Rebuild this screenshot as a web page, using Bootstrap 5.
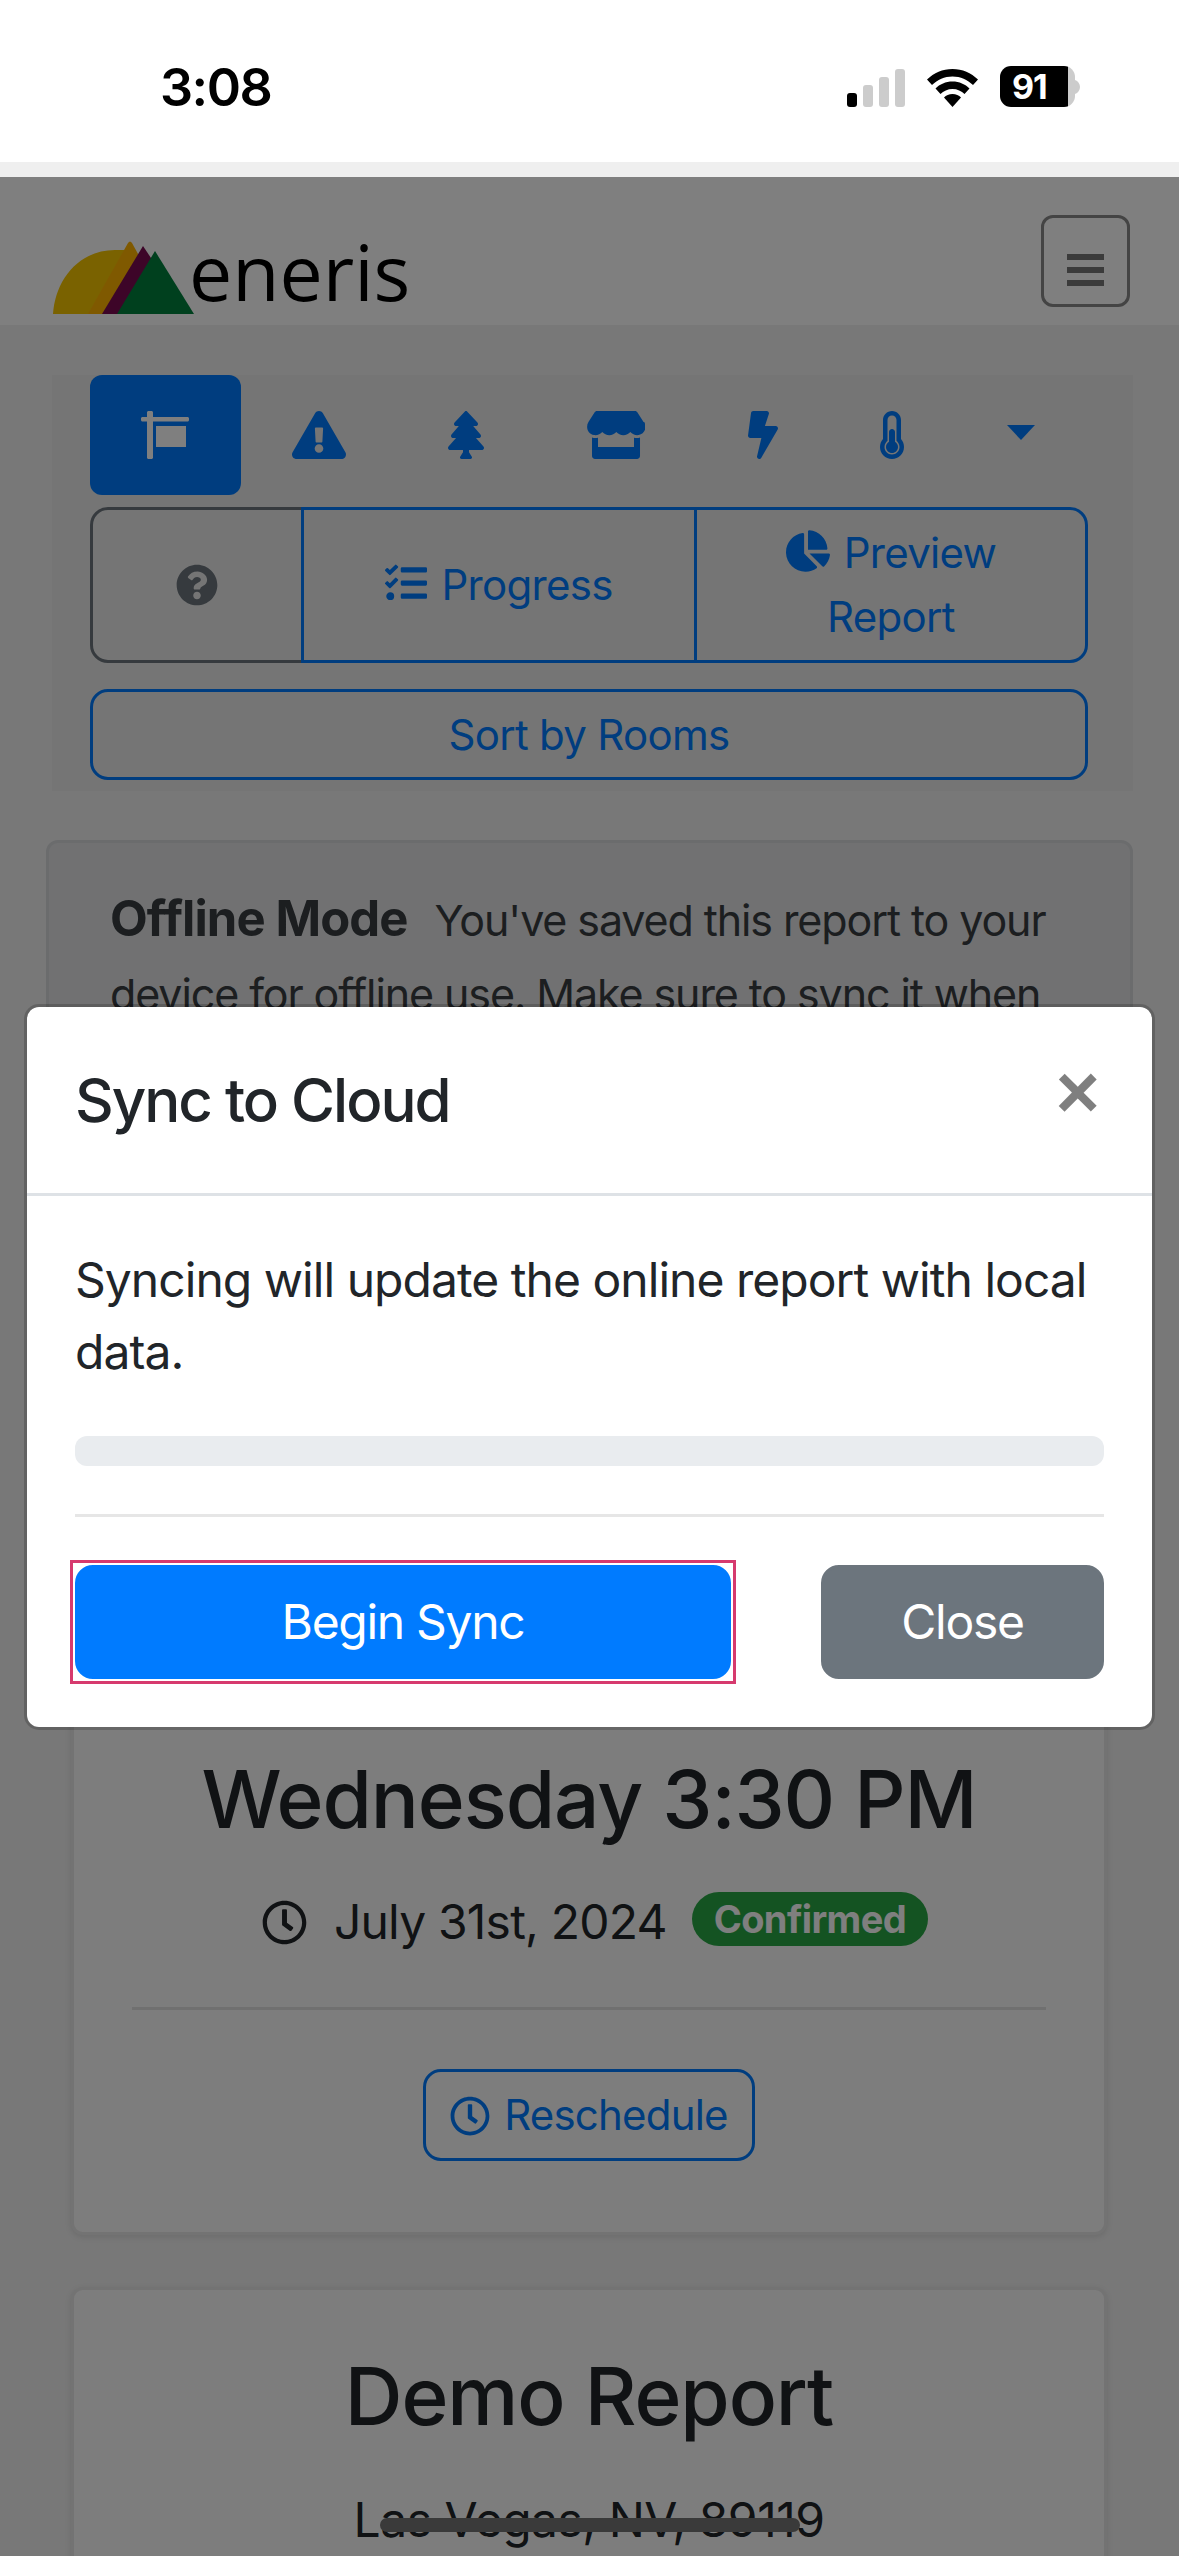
<!DOCTYPE html>
<html lang="en">
<head>
    <meta charset="UTF-8">
    <meta name="viewport" content="width=device-width, initial-scale=1.0">
    <title>Sync to Cloud</title>
    <link href="https://cdn.jsdelivr.net/npm/bootstrap@5.3.3/dist/css/bootstrap.min.css" rel="stylesheet">
    <script defer src="https://cdn.jsdelivr.net/npm/bootstrap@5.3.3/dist/js/bootstrap.bundle.min.js"></script>
    <style>
        /* page was shot at 3x, so 1rem = 48px here */
        html { font-size: 48px; }
        :root {
            --bs-border-width: 3px;
            --bs-border-radius: 12px;
            --bs-body-font-family: Inter, "Liberation Sans", sans-serif;
            --bs-body-color: #212529;
        }
        body {
            width: 1179px;
            height: 2556px;
            overflow: hidden;
            position: relative;
            background: #fff;
            letter-spacing: -.96px;
        }
        svg { display: block; fill: currentColor; }

        /* phone status bar */
        .status-bar { height: 162px; padding: 67px 99px 0 160px; background: #fff; color: #000; }
        .status-time { font-size: 52px; font-weight: 600; line-height: 42px; letter-spacing: -1.5px; }
        .status-icons { column-gap: 22px; margin-top: -1px; }
        .status-icons > svg { margin-top: 3px; }
        .batt-box { width: 75px; height: 41px; border-radius: 11px; font-size: 34px; font-weight: 700; line-height: 41px; padding-left: 12px; color: #fff; letter-spacing: -1px; background: linear-gradient(90deg, #000 68px, #ccc 68px); }
        .browser-strip { height: 15px; background: #efefef; }

        /* everything under the backdrop */
        .web-view { position: relative; height: 2379px; overflow: hidden; background: #f0f0f0; }
        .top-bar { height: 148px; padding: 38px 49px 0 53px; background: #fff; }
        .brand-name { font-family: "Open Sans", sans-serif; font-size: 77px; line-height: 76px; color: #000; margin: 0 0 4px -5px; letter-spacing: 0; }
        .brand-wrap { margin-top: 19px; }
        .menu-btn { width: 89px; height: 92px; padding: 25px 23px 0; border: 3px solid #888; border-radius: 12px; background: transparent; }
        .menu-btn span { display: block; height: 6px; margin-bottom: 7px; background: #777; }

        .tool-box { margin: 50px 46px 0 52px; padding: 0 45px 11px 38px; background: #eaeaea; }
        .tool-tabs .nav-link { height: 120px; padding: 36px 51.3px; color: #007bff; border-radius: 12px; }
        .tool-tabs .nav-link.active { background: #007bff; color: #fff; }
        .tool-tabs .tool-caret { padding-top: 50px; }
        .tool-caret i { display: block; width: 0; height: 0; border: 14px solid transparent; border-top: 15px solid currentColor; border-bottom: 0; }
        .btn-outline-primary { --bs-btn-color: #007bff; --bs-btn-border-color: #007bff; }
        .btn-outline-secondary { --bs-btn-color: #6c757d; --bs-btn-border-color: #6c757d; }
        .tool-btn { font-size: 42px; line-height: 64px; padding: 10.5px 36px; letter-spacing: -.7px; }
        .tool-group { height: 156px; margin-top: 12px; }
        .tool-group .help-btn { flex: 0 0 214px; }
        .tool-group .prog-btn { flex: 0 0 396px; }
        .tool-group .prev-btn { flex: 0 0 394px; }
        .btn-ico { display: inline-block; vertical-align: -4px; margin-right: 14px; }
        .sort-btn { margin-top: 26px; width: 100%; }

        .offline-note { margin: 49px 46px 0; padding: 39px 61px; background: #e2e3e5; border-color: #d6d8db; color: #383d41; border-radius: 12px; height: 700px; font-size: 43px; line-height: 74px; letter-spacing: -1.1px; }
        .offline-note b { margin-right: 16px; font-size: 49px; letter-spacing: -.9px; }

        .info-card { margin: 0 72px 52px 71px; border-radius: 12px; border-color: rgba(0,0,0,.08); background: #fbfbfb; box-shadow: 0 2px 6px rgba(0,0,0,.1); text-align: center; }
        .card-big { font-size: 80px; line-height: 96px; margin: 0; color: #212529; font-weight: 500; letter-spacing: -1.1px; }
        .when-card { margin-top: 156px; padding: 52px 58px 71px; }
        .when-row { margin-top: 48px; height: 54px; padding-left: 12px; font-size: 48px; line-height: 54px; letter-spacing: -.8px; }
        .when-clock { margin-right: 27px; }
        .ok-badge { --bs-badge-font-size: 38px; --bs-badge-font-weight: 700; --bs-badge-padding-x: 22px; --bs-badge-padding-y: 0; line-height: 54px; height: 54px; background: #28a745; border-radius: 27px; margin-left: 25px; margin-top: -6px; letter-spacing: -.6px; }
        .when-line { margin: 58px 0 59px; opacity: 1; border-color: rgba(0,0,0,.1); }
        .resched-btn { font-size: 42px; line-height: 64px; padding: 11px 24px; letter-spacing: -.8px; }
        .resched-btn svg { display: inline-block; vertical-align: -6px; margin-right: 14px; }
        .site-card { padding: 58px 58px 0; height: 400px; }
        .site-addr { margin-top: 40px; font-size: 48px; line-height: 72px; letter-spacing: -.5px; }

        /* modal sits inside the web view, not the whole shot */
        .modal-backdrop.sync-shade { position: absolute; width: 100%; height: 100%; }
        .modal.sync-modal { position: absolute; display: block; overflow: hidden; }
        .sync-modal .modal-content { --bs-modal-border-radius: 15px; --bs-modal-inner-border-radius: 12px; --bs-modal-border-width: 3px; }
        .sync-modal .modal-dialog { margin: 24px; max-width: none; min-height: calc(100% - 48px); }
        .sync-modal .modal-title { font-size: 60px; line-height: 90px; font-weight: 500; letter-spacing: -2px; }
        .sync-modal .modal-header { padding: 48px; border-bottom: 3px solid #dee2e6; }
        .sync-modal .modal-body { padding: 48px; font-size: 48px; }
        .close-x { border: 0; padding: 0; background: none; color: rgba(0,0,0,.5); font-family: "Liberation Sans", sans-serif; font-size: 76px; font-weight: 700; line-height: 72px; margin: -16px 4px 0 auto; }
        .sync-bar { height: 30px; --bs-progress-bg: #e9ecef; --bs-progress-border-radius: 12px; }
        .sync-line { margin: 48px 0; opacity: 1; border-color: #e6e6e6; }
        .sync-actions { --bs-gutter-x: 90px; }
        .sync-actions .btn { letter-spacing: -1.3px; }
        .btn-primary { --bs-btn-bg: #007bff; --bs-btn-border-color: #007bff; }
        .btn-secondary { --bs-btn-bg: #6c757d; --bs-btn-border-color: #6c757d; }
        .begin-frame { outline: 3px solid #d63a6e; outline-offset: 2px; }

        .home-bar { position: absolute; left: 380px; top: 2518px; width: 420px; height: 14px; border-radius: 7px; background: #3a3a3a; z-index: 2000; }
    </style>
</head>
<body>
    <div class="status-bar d-flex justify-content-between">
        <div class="status-time">3:08</div>
        <div class="status-icons d-flex align-items-start">
            <svg width="58" height="38" viewBox="0 0 58 38">
                <rect x="0" y="24" width="10" height="14" rx="3"/>
                <rect x="16" y="16" width="10" height="22" rx="3" fill="#ccc"/>
                <rect x="32" y="8" width="10" height="30" rx="3" fill="#ccc"/>
                <rect x="48" y="0" width="10" height="38" rx="3" fill="#ccc"/>
            </svg>
            <svg width="51" height="38" viewBox="0 0 51 38">
                <path d="M25.5 0C15.5 0 7 4 0 10.500l5 5.500C10.500 10.800 17.500 7.500 25.500 7.500S40.500 10.800 46 16l5-5.500C44 4 35.500 0 25.500 0z"/>
                <path d="M25.500 12.500c-6.800 0-12.800 2.700-17 7l5 5.500c3-3 7.200-5 12-5s9 2 12 5l5-5.500c-4.200-4.300-10.200-7-17-7z"/>
                <path d="M25.500 25c-3.500 0-6.500 1.300-8.500 3.500l8.500 9.500 8.500-9.500c-2-2.200-5-3.500-8.500-3.500z"/>
            </svg>
            <div class="d-flex align-items-center">
                <div class="batt-box">91</div>
                <svg width="5" height="14" viewBox="0 0 5 14"><path d="M0 0c3 1 5 4 5 7s-2 6-5 7z" fill="#ccc"/></svg>
            </div>
        </div>
    </div>
    <div class="browser-strip"></div>

    <div class="web-view">
        <nav class="top-bar d-flex justify-content-between align-items-start">
            <a class="brand-wrap d-flex align-items-end text-decoration-none" href="#">
                <svg width="141" height="73" viewBox="0 0 141 73">
                    <path d="M0 73C2 40 25 9 62 9h20L60 73z" fill="#f5c400"/>
                    <path d="M35 73L75 2q2-3 4 0L100 40 60 73z" fill="#ffb300"/>
                    <path d="M49 73L90 5l20 30-30 38z" fill="#7a0a50"/>
                    <path d="M64 73L102 10l39 63z" fill="#00803c"/>
                </svg>
                <span class="brand-name">eneris</span>
            </a>
            <button class="menu-btn" type="button" aria-label="Menu"><span></span><span></span><span></span></button>
        </nav>

        <div class="tool-box">
            <ul class="nav nav-pills tool-tabs flex-nowrap">
                <li class="nav-item"><a class="nav-link active" href="#"><svg width="48" height="48" viewBox="0 0 512 512"><path d="M496 64H128V16c0-8.800-7.200-16-16-16H80c-8.800 0-16 7.200-16 16v48H16C7.200 64 0 71.200 0 80v16c0 8.800 7.200 16 16 16h48v384c0 8.800 7.200 16 16 16h32c8.800 0 16-7.200 16-16V112h368c8.800 0 16-7.200 16-16V80c0-8.800-7.200-16-16-16zM160 384h320V160H160v224z"/></svg></a></li>
                <li class="nav-item"><a class="nav-link" href="#"><svg width="54" height="48" viewBox="0 0 576 512"><path d="M569.517 440.013C587.975 472.007 564.806 512 527.940 512H48.054c-36.937 0-59.999-40.055-41.577-71.987L246.423 23.985c18.467-32.009 64.720-31.951 83.154 0l239.940 416.028zM288 354c-25.405 0-46 20.595-46 46s20.595 46 46 46 46-20.595 46-46-20.595-46-46-46zm-43.673-165.346l7.418 136c.347 6.364 5.609 11.346 11.982 11.346h48.546c6.373 0 11.635-4.982 11.982-11.346l7.418-136c.375-6.874-5.098-12.654-11.982-12.654h-63.383c-6.884 0-12.356 5.780-11.981 12.654z"/></svg></a></li>
                <li class="nav-item"><a class="nav-link" href="#"><svg width="36" height="48" viewBox="0 0 384 512"><path d="M378.310 378.490L298.420 288h30.630c9.010 0 16.980-5 20.780-13.060 3.800-8.040 2.550-17.260-3.280-24.050L268.420 160h28.890c9.100 0 17.300-5.350 20.860-13.610 3.520-8.130 1.860-17.590-4.240-24.080L203.660 4.830c-6.030-6.450-17.280-6.450-23.320 0L70.060 122.310c-6.100 6.490-7.760 15.950-4.240 24.080C69.380 154.650 77.590 160 86.690 160h28.890l-78.140 90.890c-5.810 6.780-7.060 15.990-3.270 24.040C37.970 283 45.930 288 54.950 288h30.630L5.690 378.490c-6 6.790-7.360 16.090-3.560 24.260 3.750 8.050 12 13.250 20.990 13.250H160v24.450l-30.290 48.400c-5.320 10.640 2.420 23.160 14.310 23.160h95.960c11.890 0 19.630-12.520 14.310-23.160L224 440.450V416h136.890c8.980 0 17.240-5.200 20.990-13.250 3.800-8.170 2.440-17.470-3.570-24.260z"/></svg></a></li>
                <li class="nav-item"><a class="nav-link" href="#"><svg width="58" height="48" viewBox="0 0 616 512"><path d="M602 118.600L537.100 15C531.300 5.700 521 0 510 0H106C95 0 84.700 5.700 78.900 15L14 118.600c-33.900 54.100-3.900 129.300 59.400 137.900 4.600.6 9.100.9 13.700.9 29.900 0 56.400-13.100 74.800-33.400 18.400 20.300 45 33.400 74.800 33.400 29.900 0 56.400-13.100 74.800-33.400 18.400 20.300 45 33.400 74.800 33.400 29.900 0 56.400-13.100 74.800-33.400 18.500 20.300 45 33.400 74.800 33.400 4.700 0 9.200-.3 13.700-.9 63.500-8.500 93.600-83.700 59.600-137.900zM529.500 288c-10 0-19.900-1.500-29.500-3.800V384H116v-99.800c-9.600 2.200-19.500 3.800-29.500 3.800-6 0-12.100-.4-18-1.200-5.600-.8-11.100-2.100-16.400-3.600V480c0 17.700 14.300 32 32 32h448c17.700 0 32-14.300 32-32V283.200c-5.400 1.600-10.800 2.900-16.400 3.600-6.100.8-12.100 1.200-18.200 1.200z"/></svg></a></li>
                <li class="nav-item"><a class="nav-link" href="#"><svg width="30" height="48" viewBox="0 0 320 512"><path d="M296 160H180.600l42.600-129.800C227.200 15 215.700 0 200 0H56C44 0 33.800 8.900 32.200 20.800l-32 240C-1.700 275.200 9.500 288 24 288h118.700L96.600 482.500c-3.600 15.200 8 29.500 23.300 29.500 8.400 0 16.400-4.400 20.800-12l176-304c9.300-15.900-2.200-36-20.700-36z"/></svg></a></li>
                <li class="nav-item"><a class="nav-link" href="#"><svg width="24" height="48" viewBox="0 0 256 512"><path d="M192 384c0 35.346-28.654 64-64 64s-64-28.654-64-64c0-23.685 12.876-44.349 32-55.417V224c0-17.673 14.327-32 32-32s32 14.327 32 32v104.583c19.124 11.068 32 31.732 32 55.417zm32-84.653c19.912 22.563 32 52.194 32 84.653 0 70.696-57.303 128-128 128-.299 0-.609-.001-.909-.003C56.789 511.509-.357 453.636.002 383.333.166 351.135 12.225 321.755 32 299.347V96c0-53.019 42.981-96 96-96s96 42.981 96 96v203.347zM208 384c0-34.339-19.370-52.190-32-66.502V96c0-26.467-21.533-48-48-48-26.468 0-48 21.533-48 48v221.498c-12.732 14.428-31.825 32.100-31.999 66.080-.224 43.876 35.563 80.116 79.423 80.420L128 464c44.112 0 80-35.888 80-80z"/></svg></a></li>
                <li class="nav-item"><a class="nav-link tool-caret" href="#"><i></i></a></li>
            </ul>
            <div class="btn-group tool-group d-flex">
                <button class="btn btn-outline-secondary tool-btn help-btn d-flex align-items-center justify-content-center" type="button"><svg width="42" height="42" viewBox="0 0 512 512"><path d="M504 256c0 136.997-111.043 248-248 248S8 392.997 8 256C8 119.083 119.043 8 256 8s248 111.083 248 248zM262.655 90c-54.497 0-89.255 22.957-116.549 63.758-3.536 5.286-2.353 12.415 2.715 16.258l34.699 26.310c5.205 3.947 12.621 3.008 16.665-2.122 17.864-22.658 30.113-35.797 57.303-35.797 20.429 0 45.698 13.148 45.698 32.958 0 14.976-12.363 22.667-32.534 33.976C247.128 238.528 216 254.941 216 296v4c0 6.627 5.373 12 12 12h56c6.627 0 12-5.373 12-12v-1.333c0-28.462 83.186-29.647 83.186-106.667 0-58.002-60.165-102-116.531-102zM256 338c-25.365 0-46 20.635-46 46 0 25.364 20.635 46 46 46s46-20.636 46-46c0-25.365-20.635-46-46-46z"/></svg></button>
                <button class="btn btn-outline-primary tool-btn prog-btn" type="button"><svg class="btn-ico" width="42" height="42" viewBox="0 0 512 512"><path d="M139.610 35.500a12 12 0 0 0-17 0L58.930 98.810l-22.700-22.120a12 12 0 0 0-17 0L3.530 92.410a12 12 0 0 0 0 17l47.590 47.400a12.780 12.780 0 0 0 17.610 0l15.590-15.620L156.520 69a12.090 12.090 0 0 0 .09-17zm0 159.190a12 12 0 0 0-17 0l-63.680 63.720-22.700-22.100a12 12 0 0 0-17 0L3.530 252a12 12 0 0 0 0 17L51 316.500a12.770 12.770 0 0 0 17.600 0l15.700-15.690 72.200-72.220a12 12 0 0 0 .09-16.900zM64 368c-26.490 0-48.590 21.500-48.590 48S37.530 464 64 464a48 48 0 0 0 0-96zm432 16H208a16 16 0 0 0-16 16v32a16 16 0 0 0 16 16h288a16 16 0 0 0 16-16v-32a16 16 0 0 0-16-16zm0-320H208a16 16 0 0 0-16 16v32a16 16 0 0 0 16 16h288a16 16 0 0 0 16-16V80a16 16 0 0 0-16-16zm0 160H208a16 16 0 0 0-16 16v32a16 16 0 0 0 16 16h288a16 16 0 0 0 16-16v-32a16 16 0 0 0-16-16z"/></svg>Progress</button>
                <button class="btn btn-outline-primary tool-btn prev-btn" type="button"><svg class="btn-ico" width="44" height="42" viewBox="0 0 544 512"><path d="M527.790 288H290.500l158.030 158.030c6.040 6.040 15.980 6.530 22.190.68 38.700-36.460 65.320-85.610 73.130-140.860 1.340-9.460-6.510-17.850-16.060-17.850zm-15.830-64.800C503.720 103.740 408.260 8.280 288.800.04 279.680-.59 272 7.100 272 16.240V240h223.770c9.140 0 16.820-7.680 16.190-16.800zM224 288V50.710c0-9.550-8.390-17.400-17.840-16.060C86.990 51.490-4.100 155.600.14 280.370 4.500 408.510 114.830 513.590 243.030 511.980c50.400-.63 96.970-16.870 135.260-44.030 7.900-5.600 8.420-17.230 1.570-24.080L224 288z"/></svg>Preview Report</button>
            </div>
            <button class="btn btn-outline-primary tool-btn sort-btn" type="button">Sort by Rooms</button>
        </div>

        <div class="alert offline-note" role="alert">
            <b>Offline Mode</b> You've saved this report to your device for offline use. Make sure to sync it when
        </div>

        <div class="card info-card when-card">
            <h2 class="card-big">Wednesday 3:30 PM</h2>
            <div class="when-row d-flex justify-content-center align-items-center">
                <svg class="when-clock" width="45" height="45" viewBox="0 0 512 512"><path d="M256 8C119 8 8 119 8 256s111 248 248 248 248-111 248-248S393 8 256 8zm0 448c-110.500 0-200-89.500-200-200S145.500 56 256 56s200 89.500 200 200-89.500 200-200 200zm61.800-104.400l-84.900-61.700c-3.100-2.300-4.900-5.900-4.900-9.700V116c0-6.600 5.400-12 12-12h32c6.600 0 12 5.400 12 12v141.700l66.800 48.600c5.400 3.900 6.500 11.400 2.600 16.800L334.600 349c-3.900 5.300-11.400 6.500-16.800 2.600z"/></svg>
                <span>July 31st, 2024</span>
                <span class="badge ok-badge">Confirmed</span>
            </div>
            <hr class="when-line">
            <div><button class="btn btn-outline-primary resched-btn" type="button"><svg width="40" height="40" viewBox="0 0 512 512"><path d="M256 8C119 8 8 119 8 256s111 248 248 248 248-111 248-248S393 8 256 8zm0 448c-110.500 0-200-89.500-200-200S145.500 56 256 56s200 89.500 200 200-89.500 200-200 200zm61.800-104.400l-84.900-61.700c-3.100-2.300-4.900-5.900-4.900-9.700V116c0-6.600 5.400-12 12-12h32c6.600 0 12 5.400 12 12v141.700l66.800 48.600c5.400 3.900 6.500 11.400 2.600 16.800L334.600 349c-3.900 5.300-11.400 6.500-16.800 2.600z"/></svg>Reschedule</button></div>
        </div>

        <div class="card info-card site-card">
            <h2 class="card-big">Demo Report</h2>
            <div class="site-addr">Las Vegas, NV, 89119</div>
        </div>

        <div class="modal-backdrop fade show sync-shade"></div>
        <div class="modal fade show sync-modal" tabindex="-1" aria-modal="true" role="dialog">
            <div class="modal-dialog modal-dialog-centered">
                <div class="modal-content">
                    <div class="modal-header">
                        <h5 class="modal-title">Sync to Cloud</h5>
                        <button class="close-x" type="button" aria-label="Close">×</button>
                    </div>
                    <div class="modal-body">
                        <p class="mb-3">Syncing will update the online report with local data.</p>
                        <div class="progress sync-bar"></div>
                        <hr class="sync-line">
                        <div class="row sync-actions">
                            <div class="col-8"><div class="begin-frame"><button class="btn btn-primary w-100" type="button">Begin Sync</button></div></div>
                            <div class="col-4"><button class="btn btn-secondary w-100" type="button">Close</button></div>
                        </div>
                    </div>
                </div>
            </div>
        </div>
    </div>
    <div class="home-bar"></div>
</body>
</html>
